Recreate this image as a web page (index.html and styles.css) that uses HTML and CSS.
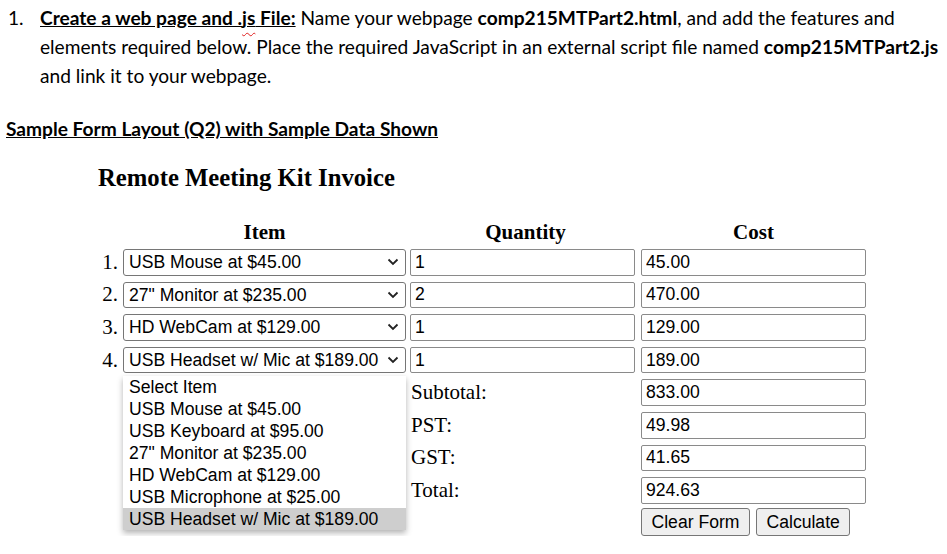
FILE: index.html
```html
<!DOCTYPE html>
<html lang="en">
<head>
    <meta charset="UTF-8">
    <meta name="viewport" content="width=device-width, initial-scale=1.0">
    <title>Remote Meeting Kit Invoice</title>
    <link rel="stylesheet" href="styles.css">
</head>
<body>
    <div class="question">
        <span class="q-num">1.</span>
        <p>
            <span class="q-title">Create a web page and .<span class="typo">js</span> File:</span> Name your webpage <b>comp215MTPart2.html</b>, and add the features and<br>
            elements required below. Place the required JavaScript in an external script file named <b>comp215MTPart2.js</b><br>
            and link it to your webpage.
        </p>
    </div>

    <div class="sample">Sample Form Layout (Q2) with Sample Data Shown</div>

    <form class="invoice">
        <h3>Remote Meeting Kit Invoice</h3>

        <div class="grid">
            <span></span>
            <div class="head">Item</div>
            <div class="head">Quantity</div>
            <div class="head">Cost</div>

            <span class="num">1.</span>
            <select>
                <option>Select Item</option>
                <option selected>USB Mouse at $45.00</option>
                <option>USB Keyboard at $95.00</option>
                <option>27" Monitor at $235.00</option>
                <option>HD WebCam at $129.00</option>
                <option>USB Microphone at $25.00</option>
                <option>USB Headset w/ Mic at $189.00</option>
            </select>
            <input type="text" value="1">
            <input type="text" value="45.00">

            <span class="num">2.</span>
            <select>
                <option>Select Item</option>
                <option>USB Mouse at $45.00</option>
                <option>USB Keyboard at $95.00</option>
                <option selected>27" Monitor at $235.00</option>
                <option>HD WebCam at $129.00</option>
                <option>USB Microphone at $25.00</option>
                <option>USB Headset w/ Mic at $189.00</option>
            </select>
            <input type="text" value="2">
            <input type="text" value="470.00">

            <span class="num">3.</span>
            <select>
                <option>Select Item</option>
                <option>USB Mouse at $45.00</option>
                <option>USB Keyboard at $95.00</option>
                <option>27" Monitor at $235.00</option>
                <option selected>HD WebCam at $129.00</option>
                <option>USB Microphone at $25.00</option>
                <option>USB Headset w/ Mic at $189.00</option>
            </select>
            <input type="text" value="1">
            <input type="text" value="129.00">

            <span class="num">4.</span>
            <div class="pick">
                <select>
                    <option>Select Item</option>
                    <option>USB Mouse at $45.00</option>
                    <option>USB Keyboard at $95.00</option>
                    <option>27" Monitor at $235.00</option>
                    <option>HD WebCam at $129.00</option>
                    <option>USB Microphone at $25.00</option>
                    <option selected>USB Headset w/ Mic at $189.00</option>
                </select>
                <!-- open list of the last select -->
                <div class="dropdown">
                    <div>Select Item</div>
                    <div>USB Mouse at $45.00</div>
                    <div>USB Keyboard at $95.00</div>
                    <div>27" Monitor at $235.00</div>
                    <div>HD WebCam at $129.00</div>
                    <div>USB Microphone at $25.00</div>
                    <div class="active">USB Headset w/ Mic at $189.00</div>
                </div>
            </div>
            <input type="text" value="1">
            <input type="text" value="189.00">

            <span></span><span></span>
            <span class="label">Subtotal:</span>
            <input type="text" value="833.00">

            <span></span><span></span>
            <span class="label">PST:</span>
            <input type="text" value="49.98">

            <span></span><span></span>
            <span class="label">GST:</span>
            <input type="text" value="41.65">

            <span></span><span></span>
            <span class="label">Total:</span>
            <input type="text" value="924.63">

            <span></span><span></span><span></span>
            <div class="buttons">
                <button type="button">Clear Form</button>
                <button type="button">Calculate</button>
            </div>
        </div>
    </form>
</body>
</html>
```

FILE: styles.css
```css
body{
    margin: 0;
    font-family: "Liberation Serif", serif;
    color: #000;
}
.question{
    display: flex;
    padding-top: 3px;
    font-family: Lato, "Open Sans", sans-serif;
    font-size: 19.15px;
    line-height: 29px;
    white-space: nowrap;
}
.q-num{
    width: 32px;
    padding-left: 8px;
    flex: none;
}
.question p{
    margin: 0;
}
.q-title{
    font-weight: bold;
    text-decoration: underline;
}
.typo{
    text-decoration: underline wavy #e02020;
    text-decoration-thickness: 1px;
    text-underline-offset: 7px;
}
.sample{
    margin: 24px 0 0 6px;
    font-family: Lato, "Open Sans", sans-serif;
    font-size: 19.15px;
    line-height: 29px;
    font-weight: bold;
    text-decoration: underline;
}
.invoice{
    margin-left: 98px;
}
.invoice h3{
    margin: 20px 0 0;
    font-size: 24.7px;
    line-height: 30px;
}
.grid{
    display: grid;
    grid-template-columns: 25px 287px 231px 225px;
    grid-template-rows: 22px;
    grid-auto-rows: 26.6px;
    row-gap: 6px;
    align-items: center;
    margin-top: 28px;
    font-size: 21px;
}
.head{
    font-weight: bold;
    text-align: center;
    line-height: 22px;
}
.grid > .head:nth-child(2){
    width: 283px;
}
.num{
    text-align: right;
    padding-right: 5px;
}
.grid select,
.grid input,
.grid button{
    font-family: "Liberation Sans", Arial, sans-serif;
    font-size: 17.6px;
    color: #000;
}
.grid select{
    appearance: none;
    width: 283px;
    height: 26.6px;
    border: 1px solid #767676;
    border-radius: 3px;
    padding: 0 2px 0 5px;
    background: #fff url("data:image/svg+xml,%3Csvg xmlns='http://www.w3.org/2000/svg' width='12' height='8' viewBox='0 0 12 8'%3E%3Cpath d='M1.5 1.5 6 6l4.5-4.5' fill='none' stroke='%23222' stroke-width='1.8'/%3E%3C/svg%3E") no-repeat right 6px center;
}
.grid input{
    width: 225px;
    height: 26.6px;
    box-sizing: border-box;
    border: 1px solid #8a8a8a;
    border-radius: 2px;
    padding: 1px 4px;
}
.pick{
    position: relative;
    height: 26.6px;
}
.dropdown{
    position: absolute;
    top: 29.5px;
    left: 0;
    width: 283px;
    background: #fff;
    box-shadow: 0 3px 6px rgba(0, 0, 0, 0.3);
    font-family: "Liberation Sans", Arial, sans-serif;
    font-size: 17.6px;
    line-height: 22px;
    z-index: 2;
}
.dropdown div{
    padding-left: 6px;
    white-space: nowrap;
}
.dropdown .active{
    background: #cecece;
}
.label{
    padding-left: 1px;
}
.buttons{
    display: flex;
    gap: 6px;
    align-self: end;
}
.grid button{
    height: 28px;
    padding: 0 9.5px;
    background: #efefef;
    border: 1px solid #767676;
    border-radius: 3px;
}
```
